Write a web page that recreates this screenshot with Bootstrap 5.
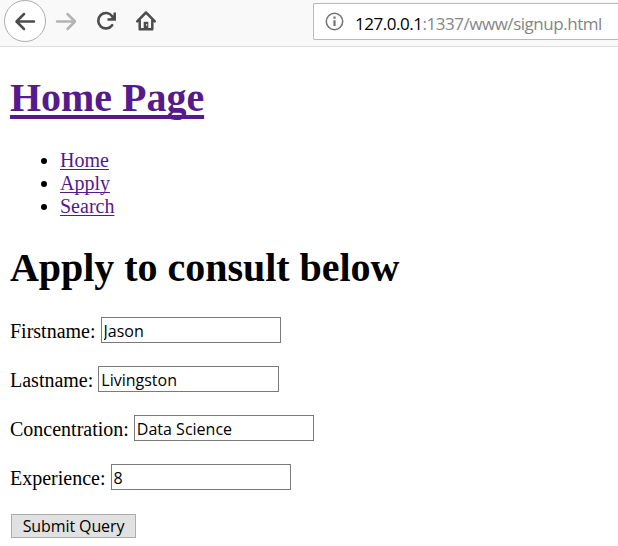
<!DOCTYPE html>
<html lang="en">
<head>
<meta charset="utf-8">
<meta name="viewport" content="width=device-width, initial-scale=1">
<title>Home Page</title>
<link href="https://cdn.jsdelivr.net/npm/bootstrap@5.3.0/dist/css/bootstrap.min.css" rel="stylesheet">
<style>
html, body { height: 546px; overflow: hidden; }
body { font-family: "Liberation Serif", serif; font-size: 20px; line-height: 23px; color: #000; background: #fff; }
.toolbar { height: 47px; background: #f9f9fa; border-bottom: 1px solid #dedede; padding-left: 4px; }
.tool { width: 40px; height: 42px; }
.tool-back { width: 42px; height: 43px; margin-top: -1px; }
.address { height: 37px; margin: 3px 0 0 147px; padding-left: 11px; border: 1px solid #b9b9ba; border-right: 0; border-radius: 2px 0 0 2px; background: #fff; font-family: "Open Sans", sans-serif; font-size: 17px; letter-spacing: -.47px; }
.address-text { margin-left: 11px; padding-top: 3px; color: #858585; white-space: nowrap; }
.page-body { padding: 28px 10px 0; }
.page-title { font-size: 40px; line-height: 46px; font-weight: 700; color: #000; letter-spacing: -.03px; }
.page-body a { color: #551a8b; text-decoration-skip-ink: none; text-decoration-thickness: 1px; text-underline-offset: 2px; }
.page-body .page-title a { text-decoration-thickness: 4px; text-underline-offset: 4px; }
.page-links { margin: 28px 0 27px; padding-left: 50px; }
.field-row { height: 26px; margin-bottom: 23px; gap: 5px; }
.field-row label { line-height: 26px; padding-top: 1px; }
.field-row input, .submit-btn { font-family: "Open Sans", sans-serif; font-size: 16px; color: #000; }
.field-row input { width: 180px; height: 26px; border: 1px solid #7a7a7a; border-radius: 0; padding: 2px 2px 0; line-height: 22px; }
.submit-btn { width: 125px; height: 24px; margin-left: 1px; padding: 1px 0 0; line-height: 21px; letter-spacing: -.1px; border: 1px solid #adadad; border-radius: 0; background: #e1e1e1; }
.entry-form { padding-top: 26px; }
.entry-form .field-row:last-of-type { margin-bottom: 24px; }
#last { width: 181px; }
</style>
<script src="https://cdn.jsdelivr.net/npm/bootstrap@5.3.0/dist/js/bootstrap.bundle.min.js"></script>
</head>
<body>
<nav class="toolbar d-flex align-items-start" aria-label="Browser toolbar">
  <svg class="tool-back flex-shrink-0" viewBox="0 0 42 43" fill="none"><circle cx="21" cy="22" r="20.5" fill="#fff" stroke="#adadad"/><path d="M30 22.500H13M20 15l-7.500 7.500 7.500 7.500" stroke="#4c4c4d" stroke-width="2.500" stroke-linecap="round" stroke-linejoin="round"/></svg>
  <svg class="tool flex-shrink-0" viewBox="0 0 40 42" fill="none"><path d="M11 21.500H28M21.500 14l7.500 7.500-7.500 7.500" stroke="#b4b4b4" stroke-width="2.500" stroke-linecap="round" stroke-linejoin="round"/></svg>
  <svg class="tool flex-shrink-0" viewBox="0 0 40 42" fill="none"><path d="M26.200 25.200A7.700 7.700 0 1 1 26.200 16.200" stroke="#4c4c4d" stroke-width="2.600" stroke-linecap="round"/><path d="M28.700 12.500V19.500H21.500" stroke="#4c4c4d" stroke-width="2.500"/><path d="M28.500 14.500V19.500H23.500Z" fill="#4c4c4d"/></svg>
  <svg class="tool flex-shrink-0" viewBox="0 0 40 42" fill="none"><path d="M11.200 21.300L20 12.500l8.800 8.800M13.700 20.500V29.300H26.300V20.500" stroke="#4c4c4d" stroke-width="2.500" stroke-linecap="round" stroke-linejoin="round"/><path d="M17.700 29V21.800H22.300V29Z" fill="#4c4c4d"/><path d="M20.200 24h1v1.700h-1z" fill="#fff"/></svg>
  <div class="address flex-grow-1 d-flex align-items-center">
    <svg class="flex-shrink-0" width="19" height="19" viewBox="0 0 19 19" fill="none"><circle cx="9.500" cy="9.500" r="8.200" stroke="#727272" stroke-width="1.500"/><path d="M9.500 8.300V14M9.500 4.500V6.700" stroke="#727272" stroke-width="2.200"/></svg>
    <span class="address-text"><span class="text-black">127.0.0.1</span>:1337/www/signup.html</span>
  </div>
</nav>
<main class="page-body">
  <h1 class="page-title mb-0"><a href="#">Home Page</a></h1>
  <ul class="page-links">
    <li><a href="#">Home</a></li>
    <li><a href="#">Apply</a></li>
    <li><a href="#">Search</a></li>
  </ul>
  <h1 class="page-title mb-0">Apply to consult below</h1>
  <form class="entry-form">
    <div class="field-row d-flex"><label for="first">Firstname:</label><input id="first" type="text" value="Jason"></div>
    <div class="field-row d-flex"><label for="last">Lastname:</label><input id="last" type="text" value="Livingston"></div>
    <div class="field-row d-flex"><label for="field">Concentration:</label><input id="field" type="text" value="Data Science"></div>
    <div class="field-row d-flex"><label for="exp">Experience:</label><input id="exp" type="text" value="8"></div>
    <button class="submit-btn d-block" type="button">Submit Query</button>
  </form>
</main>
</body>
</html>
